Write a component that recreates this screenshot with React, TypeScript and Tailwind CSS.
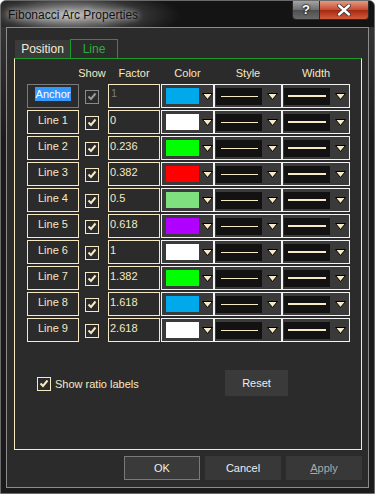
import React from "react";

type Line = { name: string; factor: string; swatch: string };

const lines: Line[] = [
  { name: "Line 1", factor: "0", swatch: "bg-[#ffffff]" },
  { name: "Line 2", factor: "0.236", swatch: "bg-[#00ff00]" },
  { name: "Line 3", factor: "0.382", swatch: "bg-[#ff0000]" },
  { name: "Line 4", factor: "0.5", swatch: "bg-[#7fe07f]" },
  { name: "Line 5", factor: "0.618", swatch: "bg-[#b000ff]" },
  { name: "Line 6", factor: "1", swatch: "bg-[#ffffff]" },
  { name: "Line 7", factor: "1.382", swatch: "bg-[#00ff00]" },
  { name: "Line 8", factor: "1.618", swatch: "bg-[#00a8ec]" },
  { name: "Line 9", factor: "2.618", swatch: "bg-[#ffffff]" },
];

const Arrow = () => (
  <svg width="11" height="7" viewBox="0 0 11 7">
    <polygon points="0.5,0.5 10.5,0.5 5.5,6.5" fill="#f6e9c3" stroke="#000" strokeWidth="1" />
  </svg>
);

const Check = ({ disabled }: { disabled?: boolean }) => (
  <div
    className={
      disabled
        ? "w-[14px] h-[14px] border border-[#8a8a8a] flex items-center justify-center"
        : "w-[14px] h-[14px] border border-[#f6e9c3] flex items-center justify-center"
    }
  >
    <svg width="10" height="9" viewBox="0 0 10 9">
      <path
        d="M1.5 4.5 L4 7 L8.5 1.5"
        stroke={disabled ? "#9a9a9a" : "#f6e9c3"}
        strokeWidth="2"
        fill="none"
      />
    </svg>
  </div>
);

// color / style / width dropdowns share the same frame
const ComboRow = ({ swatch }: { swatch: string }) => (
  <>
    <div className="ml-[1px] w-[53px] h-full border border-[#f2f2f2] bg-[#3a3a3a] flex items-center pl-[4px]">
      <div className={`w-[33px] h-[16px] ${swatch}`} />
      <div className="ml-[3px] flex"><Arrow /></div>
    </div>
    <div className="w-[68px] h-full border border-[#f2f2f2] bg-[#3a3a3a] flex items-center pl-[1px]">
      <div className="w-[46px] h-[17px] bg-[#121212] flex items-center justify-center">
        <div className="w-[37px] h-[1px] bg-[#f6e9c3]" />
      </div>
      <div className="ml-[5px] flex"><Arrow /></div>
    </div>
    <div className="w-[68px] h-full border border-[#f2f2f2] bg-[#3a3a3a] flex items-center pl-[1px]">
      <div className="w-[46px] h-[17px] bg-[#121212] flex items-center justify-center">
        <div className="w-[38px] h-[2px] bg-[#f6e9c3]" />
      </div>
      <div className="ml-[5px] flex"><Arrow /></div>
    </div>
  </>
);

export default function App() {
  return (
    <div className="w-[375px] h-[494px] overflow-hidden bg-[linear-gradient(180deg,#3a3a3a_0px,#1b1b1b_140px,#1b1b1b_100%)] border border-[#6a6a6a] rounded-t-[6px] font-['Liberation_Sans',Arial,sans-serif] text-[11px] leading-[14px] text-[#f6e9c3] select-none">
      {/* title bar */}
      <div className="h-[26px] flex justify-between bg-[#141414] bg-[radial-gradient(ellipse_110px_26px_at_70px_14px,rgba(225,225,225,0.8),rgba(110,110,110,0.35)_65%,transparent_100%)]">
        <div className="pl-[7px] pt-[7px] text-[12px] text-[#111] [text-shadow:0_0_6px_#fff]">
          Fibonacci Arc Properties
        </div>
        <div className="flex mr-[5px] h-[20px] -mt-[1px]">
          <div className="w-[28px] h-full rounded-bl-[4px] border border-[#2a2a2a] bg-[linear-gradient(180deg,#a4a4a4,#6c6c6c_50%,#4e4e4e_51%,#6a6a6a)] flex items-center justify-center text-white font-bold text-[13px] [text-shadow:0_0_2px_#000,0_0_2px_#000]">
            ?
          </div>
          <div className="w-[49px] h-full rounded-br-[4px] border border-l-0 border-[#2a2a2a] bg-[linear-gradient(180deg,#e49a84,#c8492e_50%,#a52a12_51%,#d25a3a)] flex items-center justify-center">
            <svg width="14" height="12" viewBox="0 0 14 12">
              <path d="M2 1.5 L12 10.5 M12 1.5 L2 10.5" stroke="#333" strokeWidth="4" strokeLinecap="round" />
              <path d="M2 1.5 L12 10.5 M12 1.5 L2 10.5" stroke="#fff" strokeWidth="2.4" strokeLinecap="round" />
            </svg>
          </div>
        </div>
      </div>

      {/* client area */}
      <div className="ml-[5px] w-[363px] h-[461px] border border-[#8c8c8c] bg-[#2b2b2b] pt-[11px] pl-[7px]">
        <div className="flex items-end h-[19px] ml-[1px]">
          <div className="w-[55px] h-[18px] bg-[#3a3a3a] text-[12px] flex items-center justify-center text-[#f3ecd6]">
            Position
          </div>
          <div className="w-[48px] h-[19px] border border-b-0 border-[#1c9a2c] text-[12px] text-[#2fae3f] flex items-center justify-center">
            Line
          </div>
        </div>

        <div className="w-[348px] h-[392px] border border-[#f6e9c3] border-t-[#1c9a2c] pt-[7px] pl-[12px]">
          {/* header */}
          <div className="flex h-[14px] mb-[4px]">
            <div className="w-[52px]" />
            <div className="ml-[6px] w-[14px] flex justify-center whitespace-nowrap">Show</div>
            <div className="ml-[9px] w-[52px] flex justify-center">Factor</div>
            <div className="ml-[1px] w-[53px] flex justify-center">Color</div>
            <div className="w-[68px] flex justify-center">Style</div>
            <div className="w-[68px] flex justify-center">Width</div>
          </div>

          <div className="flex flex-col gap-[2px]">
            <div className="flex h-[24px]">
              <div className="w-[52px] h-full border border-[#7a7a7a] flex justify-center pt-[2px]">
                <span className="bg-[#3399ff] text-white h-[14px] px-[1px]">Anchor</span>
              </div>
              <div className="ml-[6px] w-[14px] flex items-center pt-[1px]"><Check disabled /></div>
              <div className="ml-[9px] w-[52px] h-full border border-[#f6e9c3] pl-[2px] pt-[1px] text-[#7a7a7a]">1</div>
              <ComboRow swatch="bg-[#00a8ec]" />
            </div>
            {lines.map((l) => (
              <div key={l.name} className="flex h-[24px]">
                <div className="w-[52px] h-full border border-[#f6e9c3] flex justify-center pt-[2px]">{l.name}</div>
                <div className="ml-[6px] w-[14px] flex items-center pt-[1px]"><Check /></div>
                <div className="ml-[9px] w-[52px] h-full border border-[#f6e9c3] pl-[1px] pt-[2px]">{l.factor}</div>
                <ComboRow swatch={l.swatch} />
              </div>
            ))}
          </div>

          <div className="flex items-center mt-[28px] pl-[10px]">
            <div className="w-[188px] flex items-center gap-[4px] pt-[1px]">
              <Check />
              <span>Show ratio labels</span>
            </div>
            <div className="w-[63px] h-[26px] bg-[#3a3a3a] flex items-center justify-center text-[#eeeeee]">
              Reset
            </div>
          </div>
        </div>

        {/* dialog buttons */}
        <div className="flex justify-end gap-[5px] mt-[6px] w-[348px]">
          <div className="w-[76px] h-[24px] border border-[#7a7a7a] bg-[#3a3a3a] flex items-center justify-center text-[#eeeeee]">
            OK
          </div>
          <div className="w-[76px] h-[24px] bg-[#383838] flex items-center justify-center text-[#eeeeee]">
            Cancel
          </div>
          <div className="w-[76px] h-[24px] bg-[#383838] flex items-center justify-center text-[#a9a9a9]">
            <span><span className="underline">A</span>pply</span>
          </div>
        </div>
      </div>
    </div>
  );
}
